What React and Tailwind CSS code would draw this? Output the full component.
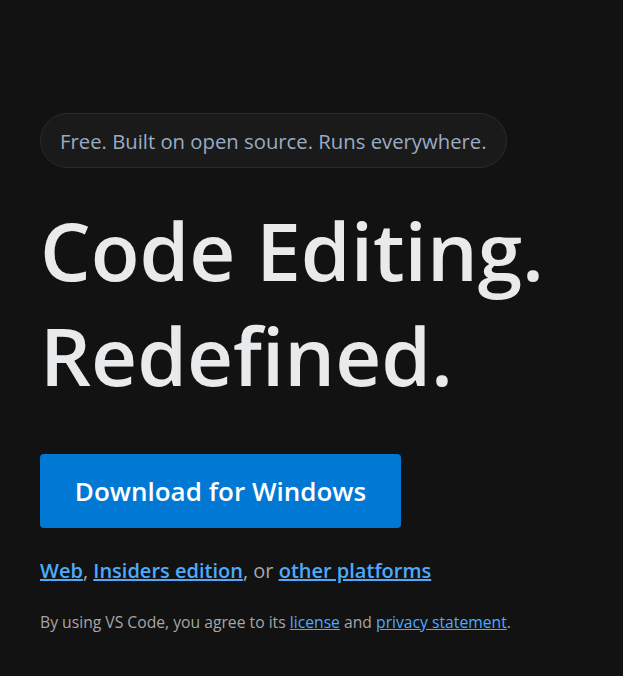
export default function App() {
  return (
    <div className="min-h-[676px] w-full bg-[#121212] font-['Open_Sans',sans-serif]">
      <div className="px-10 pt-[113px]">
        <div className="inline-flex h-[55px] items-center rounded-full border border-[#2b2b2b] bg-[#1a1a1a] px-[19px] pt-[2px] text-[20.3px] text-[#9aabc4]">
          Free. Built on open source. Runs everywhere.
        </div>
        <h1 className="mt-[29px] text-[80px] font-semibold leading-[105px] text-[#e9eaec]">
          Code Editing.
          <br />
          Redefined.
        </h1>
        <div className="mt-[47px]">
          <a className="inline-flex h-[74px] w-[361px] items-center justify-center rounded-[4px] bg-[#0078d4] text-[26px] font-semibold text-white">
            Download for Windows
          </a>
        </div>
        <p className="mt-[28px] text-[20px] text-[#a6a6a6]">
          <a className="font-semibold text-[#4daafc] underline">Web</a>,{" "}
          <a className="font-semibold text-[#4daafc] underline">Insiders edition</a>, or{" "}
          <a className="font-semibold text-[#4daafc] underline">other platforms</a>
        </p>
        <p className="mt-[25px] text-[15.7px] text-[#a6a6a6]">
          By using VS Code, you agree to its{" "}
          <a className="text-[#4daafc] underline">license</a> and{" "}
          <a className="text-[#4daafc] underline">privacy statement</a>.
        </p>
      </div>
    </div>
  );
}
